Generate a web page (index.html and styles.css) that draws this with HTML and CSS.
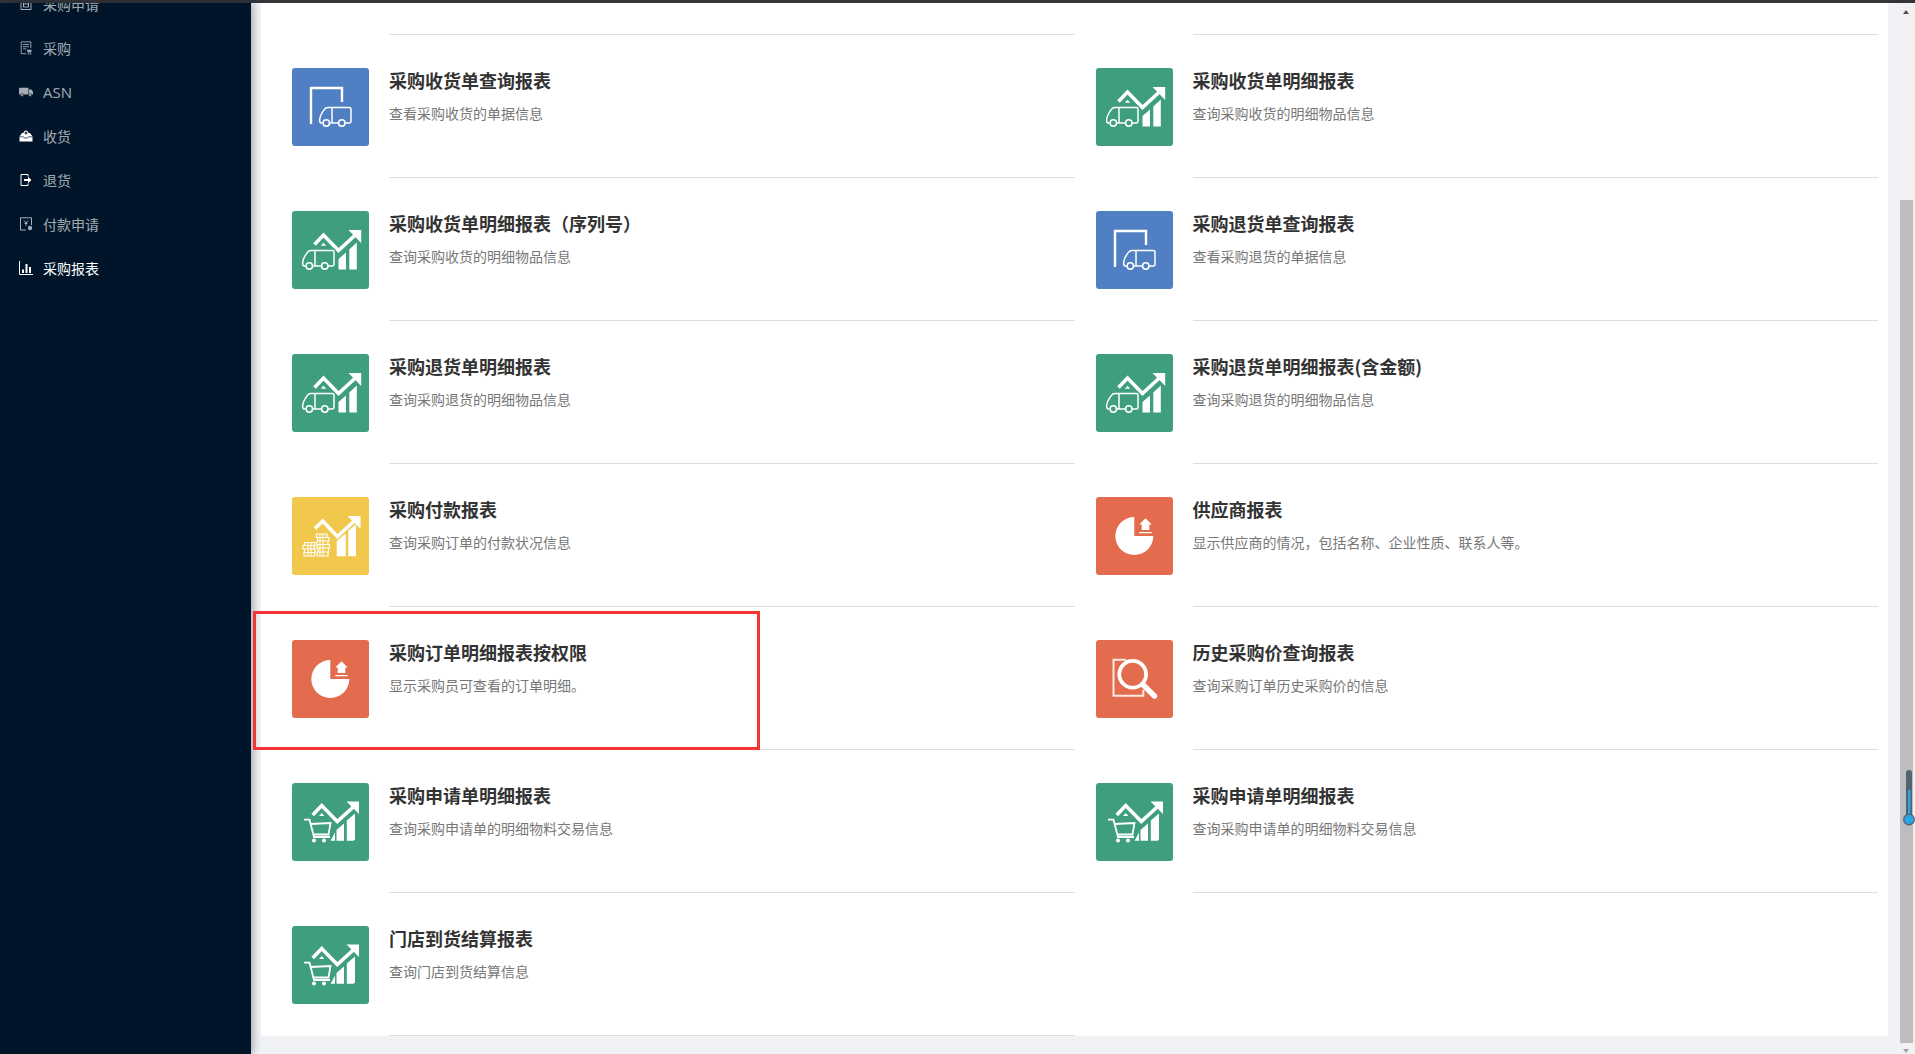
FILE: index.html
```html
<!DOCTYPE html>
<html lang="zh-CN">
<head>
<meta charset="utf-8">
<title>采购报表</title>
<link rel="stylesheet" href="styles.css">
</head>
<body>
<svg class="defs" width="0" height="0" aria-hidden="true">
  <defs>
    <g id="truck" fill="none" stroke="#fff" stroke-width="1.5">
      <path d="M3.6 16H3C1.2 16 .6 15 .6 13.4 .6 9.6 3 5.6 5.2 2.6 6.2 1.2 7.2.6 9 .6H30.4C31.4.6 32 1.2 32 2.2V14.6C32 15.6 31.4 16 30.4 16H26M19.6 16H10.8"/>
      <path d="M13 1V16"/>
      <circle cx="7.3" cy="16" r="3.2"/>
      <circle cx="22.8" cy="16" r="3.2"/>
    </g>
    <symbol id="i-dock" viewBox="0 0 77 78">
      <path d="M19 56V20H50V34" fill="none" stroke="#fff" stroke-width="2.4"/>
      <use href="#truck" x="27" y="39"/>
    </symbol>
    <symbol id="i-truck-chart" viewBox="0 0 77 78">
      <path d="M22.5 33.500 31.500 24 46.500 39.500 66 21.500" fill="none" stroke="#fff" stroke-width="3.600"/>
      <path d="M56.500 19H69.200V32Z" fill="#fff"/>
      <path d="M28.800 34.800 31.500 31.800 34.200 34.800Z" fill="#fff"/>
      <path d="M46.500 48 54 41.500V58.500H46.500ZM57.300 38.500 64.800 31.500V58.500H57.300Z" fill="#fff"/>
      <use href="#truck" x="10" y="39"/>
    </symbol>
    <symbol id="i-cart-chart" viewBox="0 0 77 78">
      <path d="M20.700 32 29.700 22.500 45.300 38.500 64 21.500" fill="none" stroke="#fff" stroke-width="3.600"/>
      <path d="M54.500 18.500H67V31Z" fill="#fff"/>
      <path d="M27 33 29.700 30 32.400 33Z" fill="#fff"/>
      <path d="M38.600 57.700 43 49.500V57.700ZM44.500 47 52 40.500V57.700H44.500ZM54.800 37.500 63 30.500V55.700Q63 57.700 61 57.700H54.800Z" fill="#fff"/>
      <path d="M12 36.700H17.500L22 54H38" fill="none" stroke="#fff" stroke-width="1.800"/>
      <path d="M18.500 41 38.500 40 36.500 51.500H21.500" fill="none" stroke="#fff" stroke-width="1.800"/>
      <circle cx="22" cy="57.500" r="2" fill="#fff"/>
      <circle cx="32" cy="57.500" r="2" fill="#fff"/>
    </symbol>
    <symbol id="i-coin-chart" viewBox="0 0 77 78">
      <path d="M23 31.500 30.700 24 45.300 39.500 65 21.500" fill="none" stroke="#fff" stroke-width="3.600"/>
      <path d="M55.500 19H68.500V32Z" fill="#fff"/>
      <path d="M44.700 44 53.800 36.500V59.300H44.700ZM56.300 33.500 64 27.500V59.300H56.300Z" fill="#fff"/>
      <g fill="none" stroke="#fff" stroke-width="1.200">
        <path d="M12.500 45.500H23V48.500H12.500ZM11 48.500H22V52H11ZM12.500 52H23V55.500H12.500ZM12 55.500H22.500V59H12Z"/>
        <path d="M24.500 37H35V40.500H24.500ZM25.500 40.500H37V44H25.500ZM25 44H36V47.500H25ZM25 47.500H37.500V51H25ZM26 51H36.500V55H26ZM25 55H36V59H25Z"/>
      </g>
      <path d="M16 45.500V59M19 45.500V59M28 37V59M31 37V59" stroke="#fff" stroke-width="1"/>
    </symbol>
    <symbol id="i-pie" viewBox="0 0 77 78">
      <path d="M38.300 20A19 19 0 1 0 57.300 39H38.300Z" fill="#fff"/>
      <path d="M49.500 21.300 55.700 27.500H53.300V33H45.700V27.500H43.300ZM43.300 35H55.700V36.300H43.300Z" fill="#fff"/>
    </symbol>
    <symbol id="i-search" viewBox="0 0 77 78">
      <path d="M30 19.700H17.500V55.700H47.300V50" fill="none" stroke="#fff" stroke-width="2" opacity=".85"/>
      <circle cx="36.700" cy="34.300" r="13.400" fill="none" stroke="#fff" stroke-width="3.800"/>
      <path d="M47.500 45.300 58.500 56" fill="none" stroke="#fff" stroke-width="5.400" stroke-linecap="round"/>
    </symbol>
  </defs>
</svg>

<div class="topbar"></div>
<div class="app">
  <aside class="sidebar">
    <ul class="menu">
      <li class="menu-item">
        <svg class="menu-icon" viewBox="0 0 14 14"><path d="M2 1.500H12V12.500H2ZM4.500 4H9.500V10H4.500ZM4.500 7H9.500" fill="none" stroke="currentColor"/></svg>
        <span>采购申请</span>
      </li>
      <li class="menu-item">
        <svg class="menu-icon" viewBox="0 0 14 16"><path d="M7 14.500H1.500V1H12.500V8M3.500 4H10.500M3.500 6.500H10.500M3.500 9H7.500" fill="none" stroke="currentColor"/><path d="M8 10H13.500L12.800 13H9ZM9 14H10.500V15.500H9ZM11.500 14H13V15.500H11.500Z" fill="currentColor"/></svg>
        <span>采购</span>
      </li>
      <li class="menu-item">
        <svg class="menu-icon" viewBox="0 0 14 10"><path d="M0 1.500Q0 .8.800.8H9.500V7.500H0ZM10 2.500H12.500L14 4.800V7.500H10Z" fill="currentColor"/><circle cx="3" cy="8" r="1.500" fill="currentColor" stroke="#001529" stroke-width=".6"/><circle cx="11" cy="8" r="1.500" fill="currentColor" stroke="#001529" stroke-width=".6"/></svg>
        <span class="menu-latin">ASN</span>
      </li>
      <li class="menu-item">
        <svg class="menu-icon menu-icon-bright" viewBox="0 0 14 14"><path d="M.5 7.500 3 4H4.500A2.500 2.500 0 0 1 9.500 4H11L13.500 7.500V12.500H.5Z" fill="currentColor"/><path d="M5.500 4H8.500M7 2.500V5.500" stroke="#001529"/><path d="M.5 7.800H4.500L5.500 9H8.500L9.500 7.800H13.500" fill="none" stroke="#001529" stroke-width=".7"/></svg>
        <span>收货</span>
      </li>
      <li class="menu-item">
        <svg class="menu-icon menu-icon-bright" viewBox="0 0 14 14"><path d="M9 3.500V1.500H2V12.500H9V10.500" fill="none" stroke="currentColor"/><path d="M5 6H9V3.800L12.500 7 9 10.200V8H5Z" fill="currentColor"/></svg>
        <span>退货</span>
      </li>
      <li class="menu-item">
        <svg class="menu-icon" viewBox="0 0 14 14"><path d="M7 13H1.500V.8H12.500V8" fill="none" stroke="currentColor"/><path d="M5 3.500 7 6 9 3.500M7 6V9M5.500 6.500H8.500" fill="none" stroke="currentColor" stroke-width=".9"/><circle cx="11" cy="11" r="2.200" fill="currentColor"/></svg>
        <span>付款申请</span>
      </li>
      <li class="menu-item menu-item-active">
        <svg class="menu-icon" viewBox="0 0 14 14"><path d="M.5 0V13.500H14" fill="none" stroke="currentColor"/><path d="M3 8.500H5V12H3ZM6.500 3H8.500V12H6.500ZM10 6H12V12H10Z" fill="currentColor"/></svg>
        <span>采购报表</span>
      </li>
    </ul>
  </aside>

  <main class="main">
    <section class="panel">
      <article class="report">
        <svg class="report-icon blue"><use href="#i-dock"/></svg>
        <div class="report-text report-text-first"><h3>采购收货单查询报表</h3><p>查看采购收货的单据信息</p></div>
      </article>
      <article class="report">
        <svg class="report-icon green"><use href="#i-truck-chart"/></svg>
        <div class="report-text report-text-first"><h3>采购收货单明细报表</h3><p>查询采购收货的明细物品信息</p></div>
      </article>
      <article class="report">
        <svg class="report-icon green"><use href="#i-truck-chart"/></svg>
        <div class="report-text"><h3>采购收货单明细报表（序列号）</h3><p>查询采购收货的明细物品信息</p></div>
      </article>
      <article class="report">
        <svg class="report-icon blue"><use href="#i-dock"/></svg>
        <div class="report-text"><h3>采购退货单查询报表</h3><p>查看采购退货的单据信息</p></div>
      </article>
      <article class="report">
        <svg class="report-icon green"><use href="#i-truck-chart"/></svg>
        <div class="report-text"><h3>采购退货单明细报表</h3><p>查询采购退货的明细物品信息</p></div>
      </article>
      <article class="report">
        <svg class="report-icon green"><use href="#i-truck-chart"/></svg>
        <div class="report-text"><h3>采购退货单明细报表(含金额)</h3><p>查询采购退货的明细物品信息</p></div>
      </article>
      <article class="report">
        <svg class="report-icon yellow"><use href="#i-coin-chart"/></svg>
        <div class="report-text"><h3>采购付款报表</h3><p>查询采购订单的付款状况信息</p></div>
      </article>
      <article class="report">
        <svg class="report-icon coral"><use href="#i-pie"/></svg>
        <div class="report-text"><h3>供应商报表</h3><p>显示供应商的情况，包括名称、企业性质、联系人等。</p></div>
      </article>
      <article class="report">
        <svg class="report-icon coral"><use href="#i-pie"/></svg>
        <div class="report-text"><h3>采购订单明细报表按权限</h3><p>显示采购员可查看的订单明细。</p></div>
      </article>
      <article class="report">
        <svg class="report-icon coral"><use href="#i-search"/></svg>
        <div class="report-text"><h3>历史采购价查询报表</h3><p>查询采购订单历史采购价的信息</p></div>
      </article>
      <article class="report">
        <svg class="report-icon green"><use href="#i-cart-chart"/></svg>
        <div class="report-text"><h3>采购申请单明细报表</h3><p>查询采购申请单的明细物料交易信息</p></div>
      </article>
      <article class="report">
        <svg class="report-icon green"><use href="#i-cart-chart"/></svg>
        <div class="report-text"><h3>采购申请单明细报表</h3><p>查询采购申请单的明细物料交易信息</p></div>
      </article>
      <article class="report">
        <svg class="report-icon green"><use href="#i-cart-chart"/></svg>
        <div class="report-text"><h3>门店到货结算报表</h3><p>查询门店到货结算信息</p></div>
      </article>
    </section>
  </main>

  <div class="scrollbar">
    <span class="arrow arrow-up"></span>
    <div class="thumb"></div>
    <span class="arrow arrow-down"></span>
  </div>
</div>

<div class="highlight"></div>
<svg class="thermo" viewBox="0 0 12 56">
  <rect x="3" y="0" width="6" height="50" rx="3" fill="#52646f"/>
  <rect x="5" y="20" width="2.400" height="30" fill="#2ba6e3"/>
  <circle cx="6" cy="49.500" r="5.300" fill="#2ba6e3" stroke="#52646f" stroke-width="1.200"/>
</svg>
</body>
</html>
```

FILE: styles.css
```css
* {
  box-sizing: border-box;
}

html,
body {
  margin: 0;
  height: 100%;
}

body {
  position: relative;
  display: flex;
  flex-direction: column;
  overflow: hidden;
  background: #f0f2f5;
  font-family: "Noto Sans CJK SC", "Open Sans", sans-serif;
}

.defs {
  position: absolute;
}

.topbar {
  flex: none;
  height: 3px;
  background: #333539;
}

.app {
  flex: 1;
  display: flex;
  min-height: 0;
}

.sidebar {
  position: relative;
  z-index: 1;
  flex: none;
  width: 251px;
  overflow: hidden;
  background: #001529;
  box-shadow: 2px 0 8px rgba(0, 21, 41, 0.35);
}

.menu {
  list-style: none;
  margin: -21px 0 0;
  padding: 0;
}

.menu-item {
  display: flex;
  align-items: center;
  gap: 10px;
  height: 44px;
  padding-left: 19px;
  color: rgba(255, 255, 255, 0.65);
  font-size: 14px;
}

.menu-item-active {
  color: #fff;
}

.menu-latin {
  font-family: "Open Sans", sans-serif;
  font-size: 15px;
}

.menu-icon {
  flex: none;
  width: 14px;
  height: 14px;
}

.menu-icon-bright {
  color: #fff;
}

.main {
  flex: 1;
  min-width: 0;
  padding-left: 10px;
}

.panel {
  position: relative;
  z-index: 2;
  display: grid;
  grid-template-columns: 1fr 1fr;
  column-gap: 21px;
  align-content: start;
  height: 1033px;
  padding: 32px 10px 0 31px;
  background: #fff;
}

.report {
  display: flex;
  gap: 20px;
  height: 143px;
  min-width: 0;
}

.report-icon {
  flex: none;
  width: 77px;
  height: 78px;
  margin-top: 33px;
  border-radius: 3px;
}

.blue {
  background: #5080c3;
}

.green {
  background: #3f9f7d;
}

.yellow {
  background: #f1c84c;
}

.coral {
  background: #e46c4e;
}

.report-text {
  flex: 1;
  min-width: 0;
  padding-top: 33px;
  border-bottom: 1px solid #ddd;
}

.report-text-first {
  box-shadow: 0 -1px 0 #ddd;
}

.report-text h3 {
  margin: 0;
  color: #333;
  font-size: 18px;
  font-weight: 700;
  line-height: 24px;
}

.report-text p {
  margin: 11px 0 0;
  color: #777;
  font-size: 14px;
  line-height: 20px;
}

.scrollbar {
  position: relative;
  flex: none;
  display: flex;
  flex-direction: column;
  align-items: flex-start;
  width: 15px;
  margin-left: 12px;
  background: #f1f1f1;
}

.thumb {
  width: 13px;
  height: 843px;
  margin-top: 197px;
  background: #bdbdbd;
}

.arrow {
  position: absolute;
  left: 3px;
  width: 0;
  height: 0;
  border-left: 3.5px solid transparent;
  border-right: 3.5px solid transparent;
}

.arrow-up {
  top: 7px;
  border-bottom: 4px solid #505050;
}

.arrow-down {
  bottom: 1px;
  border-top: 4px solid #a3a3a3;
}

.highlight {
  position: absolute;
  left: 253px;
  top: 611px;
  width: 507px;
  height: 139px;
  z-index: 3;
  border: 3px solid #f33535;
}

.thermo {
  position: absolute;
  left: 1903px;
  top: 770px;
  z-index: 3;
  width: 12px;
  height: 56px;
}
```
